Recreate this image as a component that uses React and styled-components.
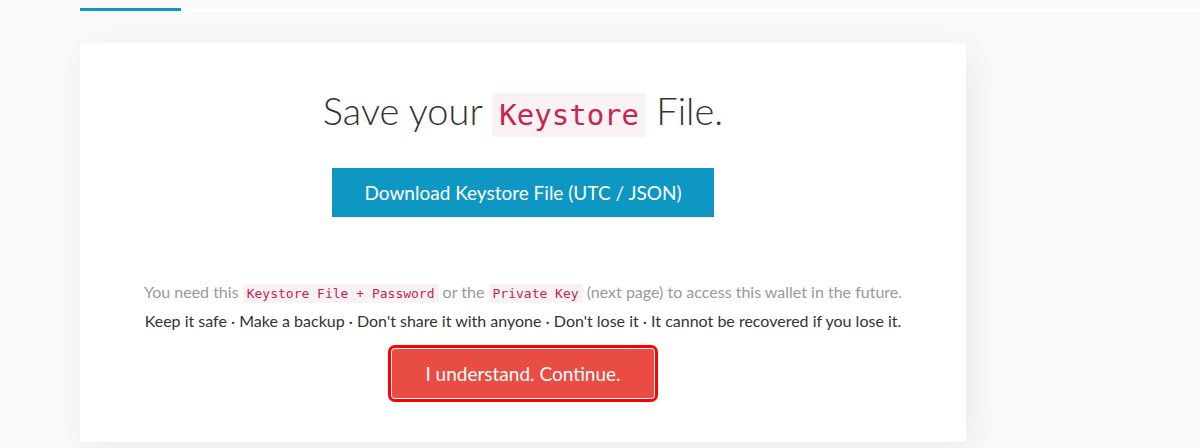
import React from "react";
import styled, { createGlobalStyle } from "styled-components";

const GlobalStyle = createGlobalStyle`
  html, body {
    margin: 0;
    padding: 0;
    background: #fafafa;
    font-family: Lato, "Open Sans", sans-serif;
    color: #333;
  }
`;

const Page = styled.div`
  width: 1200px;
  height: 448px;
  overflow: hidden;
  background: #fafafa;
`;

const TabBar = styled.div`
  display: flex;
  align-items: flex-end;
  height: 11px;
  margin-left: 80px;
`;

const ActiveTab = styled.div`
  width: 101px;
  height: 3px;
  background: #0e97c2;
  align-self: flex-start;
  margin-top: 8px;
`;

const TabRule = styled.div`
  flex: 1;
  height: 2px;
  background: #fff;
`;

const Card = styled.section`
  width: 886px;
  margin: 32px 0 0 80px;
  box-sizing: border-box;
  background: #fff;
  box-shadow: 6px 6px 36px rgba(0, 0, 0, 0.07);
  padding: 47px 0 44px;
  text-align: center;
`;

const Title = styled.h1`
  margin: 0;
  font-weight: 300;
  font-size: 38px;
  line-height: 41px;
  color: #333;
`;

const Code = styled.code`
  font-family: "DejaVu Sans Mono", "Liberation Mono", monospace;
  color: #c7254e;
  background: #f9f2f4;
  font-size: ${(p) => (p.big ? "29px" : "13px")};
  padding: ${(p) => (p.big ? "5px 7px" : "2px 4px")};
  border-radius: 2px;
`;

const PrimaryButton = styled.button`
  display: block;
  margin: 32px auto 0;
  width: 382px;
  height: 49px;
  border: 0;
  border-radius: 0;
  background: #0e97c2;
  color: #fff;
  font-family: Lato, sans-serif;
  font-size: 19px;
  cursor: pointer;
`;

const Note = styled.p`
  margin: ${(p) => (p.first ? "65px 0 0" : "7px 0 0")};
  font-size: 16px;
  line-height: 20px;
  color: ${(p) => (p.muted ? "#999" : "#333")};
`;

const DangerButton = styled.button`
  display: block;
  margin: 18px auto 0;
  width: 262px;
  height: 49px;
  border: 0;
  border-radius: 3px;
  background: #e94c43;
  color: #fff;
  font-family: Lato, sans-serif;
  font-size: 19px;
  box-shadow: 0 0 0 1px #fff, 0 0 0 4px #ff0000;
  cursor: pointer;
`;

export default function App() {
  return (
    <Page>
      <GlobalStyle />
      <TabBar>
        <ActiveTab />
        <TabRule />
      </TabBar>
      <Card>
        <Title>
          Save your <Code big>Keystore</Code> File.
        </Title>
        <PrimaryButton>Download Keystore File (UTC / JSON)</PrimaryButton>
        <Note first muted>
          You need this <Code>Keystore File + Password</Code> or the{" "}
          <Code>Private Key</Code> (next page) to access this wallet in the future.
        </Note>
        <Note>
          Keep it safe · Make a backup · Don't share it with anyone · Don't lose it · It
          cannot be recovered if you lose it.
        </Note>
        <DangerButton>I understand. Continue.</DangerButton>
      </Card>
    </Page>
  );
}
